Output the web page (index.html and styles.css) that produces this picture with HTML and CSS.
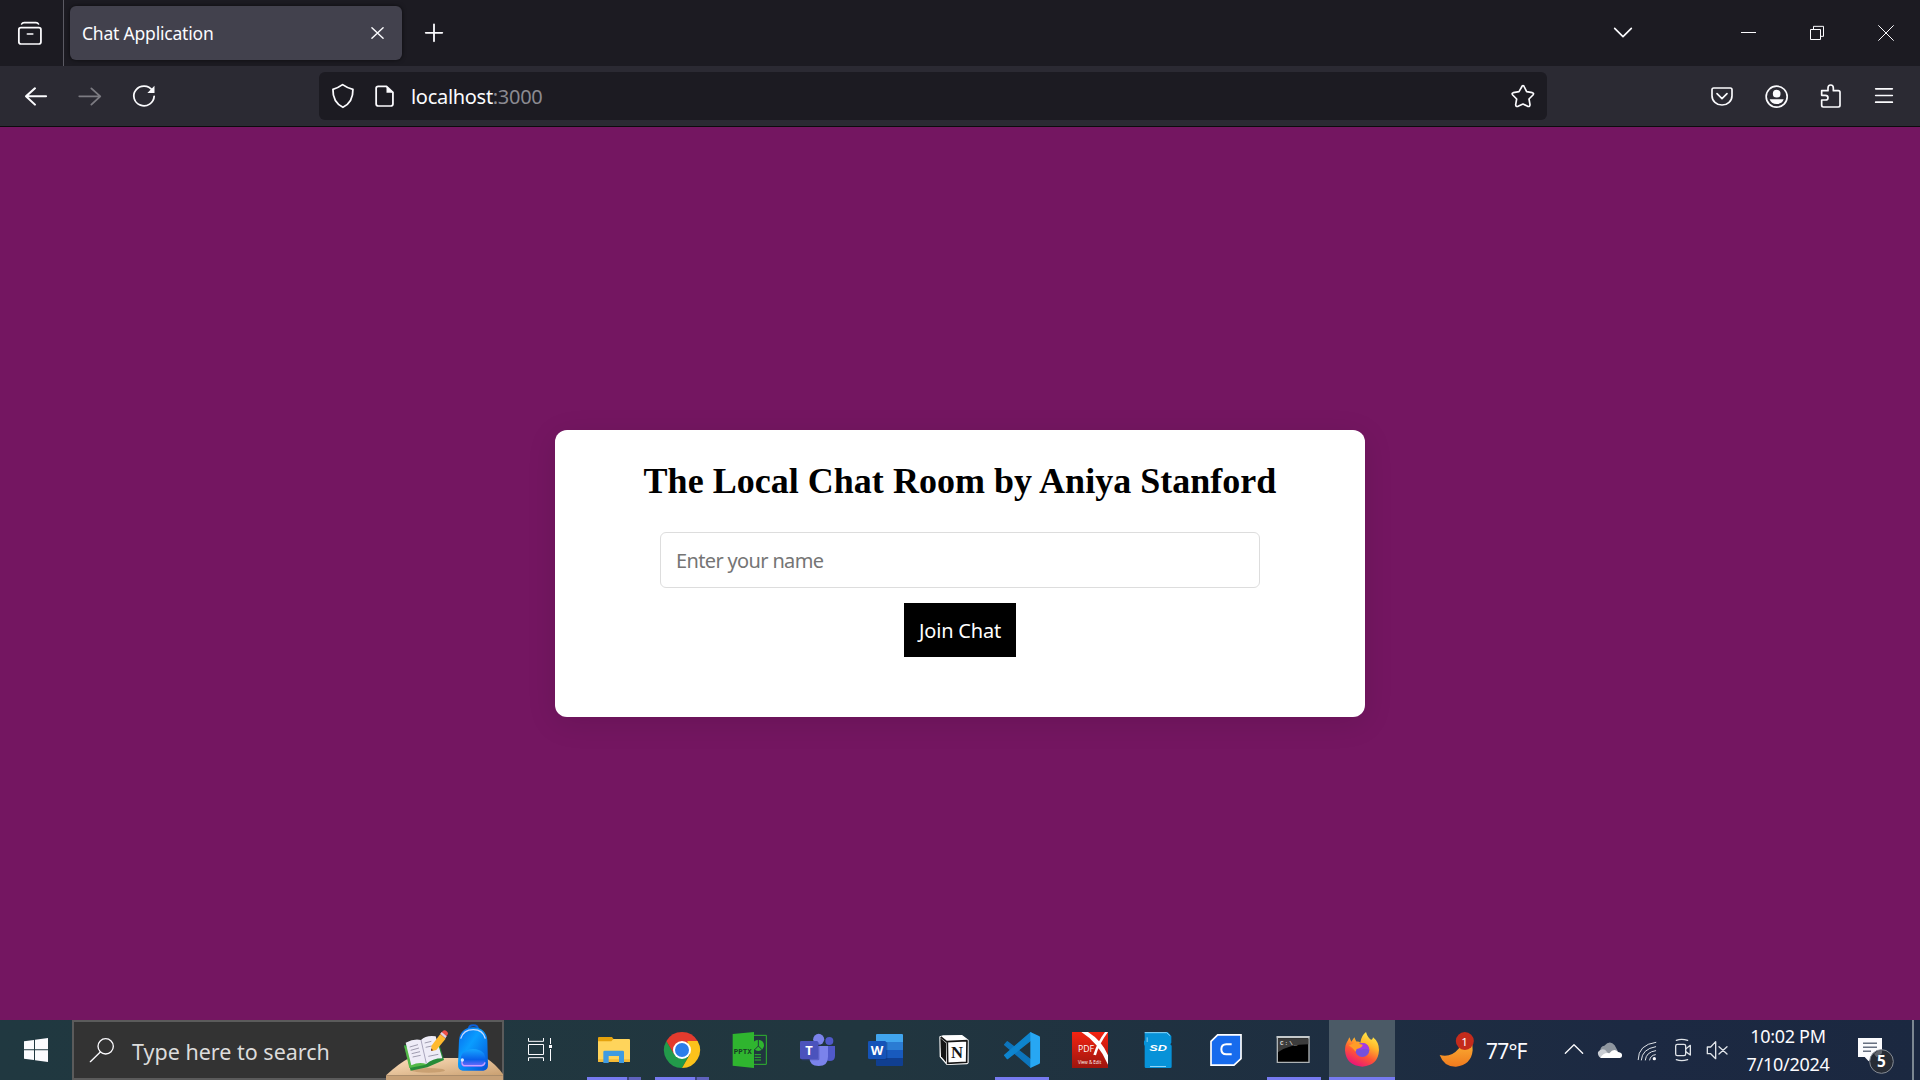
FILE: index.html
```html
<!DOCTYPE html>
<html lang="en">
<head>
<meta charset="utf-8">
<title>Chat Application</title>
<link rel="stylesheet" href="styles.css">
</head>
<body>
<header class="tabstrip">
  <svg class="firefox-view" viewBox="0 0 177 198" preserveAspectRatio="none"><g class="line w5"><rect x="53" y="83" width="62" height="49" rx="6"/><path d="M61 72q2-4 7-4h33q5 0 7 4"/><path d="M77 102h15"/></g></svg>
  <div class="tab">
    <span class="tab-title">Chat Application</span>
    <svg class="tab-close" viewBox="1029 69 60 60" preserveAspectRatio="none"><path class="line w4" d="M1043 83l32 32M1075 83l-32 32"/></svg>
  </div>
  <svg class="new-tab" viewBox="1180 66 72 72" preserveAspectRatio="none"><path class="line w5" d="M1216 76v51M1193 101.500h46"/></svg>
  <svg class="window-buttons" viewBox="360 0 960 198">
    <path class="line w5" d="M404 85l25 25 25-25"/>
    <g class="line sharp w3"><path d="M783 97.500h45"/><path d="M991.500 88.500h30v30h-30zM1000.500 88v-9h30v30h-9"/><path d="M1195 76l46 46M1241 76l-46 46"/></g>
  </svg>
</header>
<nav class="toolbar">
  <svg class="nav-buttons" viewBox="0 198 894 180" preserveAspectRatio="none">
    <path class="line w6" d="M129 289H74M98 265l-25 24 25 25"/>
    <path class="line w5 disabled" d="M222 289h58M256 265l25 24-25 25"/>
    <path class="line w5" d="M427 271a28.500 29.500 0 1 0 5 18"/><path class="fill" d="M433 257v22h-20z"/>
  </svg>
  <div class="urlbar">
    <svg class="url-icons" viewBox="894 216 252 144" preserveAspectRatio="none">
      <path class="line w5" d="M960 254q13 10 29 14 1 39-28 54-29-15-28-54 14-4 27-14z"/>
      <path class="line w5" d="M1060 259h23l18 18v35q0 6-6 6h-35q-6 0-6-6v-47q0-6 6-6z"/><path class="fill" d="M1083 259l19 19h-19z"/>
    </svg>
    <span class="url">localhost<span class="port">:3000</span></span>
    <svg class="star" viewBox="57 216 144 144"><path class="line w5" d="M129 257q3 0 4 4l7 14 17 3q6 2 2 7l-12 12 3 17q0 7-7 5l-14-7-15 7q-7 2-7-5l3-17-12-12q-4-5 2-7l17-3 8-14q1-4 4-4z"/></svg>
  </div>
  <svg class="tool-buttons" viewBox="660 198 660 180">
    <path class="line w5" d="M701 264h50q5 0 5 5v18a30 28 0 0 1-60 0v-18q0-5 5-5zM711 281l15 15 15-15"/>
    <circle class="line w5" cx="890" cy="290" r="31.500"/><circle class="fill" cx="890" cy="281" r="11.500"/><path class="fill" d="M869 298h42q-4 14-21 14t-21-14z"/>
    <path class="line w5" d="M1025 272h19v-8q0-9 8-9t8 9v8h15q5 0 5 5v39q0 5-5 5h-45q-5 0-5-5v-16h11q8 0 8-7t-8-7h-11z"/>
    <path class="line w5" d="M1187 266.500h50M1187 286.500h50M1187 306.500h50"/>
  </svg>
</nav>
<main class="page">
  <section class="card">
    <h1 class="heading">The Local Chat Room by Aniya Stanford</h1>
    <input class="name-input" type="text" placeholder="Enter your name">
    <button class="join" type="button">Join Chat</button>
  </section>
</main>
<footer class="taskbar">
  <svg class="start" viewBox="0 30 216 180"><path class="fill" d="M72 94l30-4v28H72zM105 89l39-5v34h-39zM72 121h30v29l-30-4zM105 121h39v35l-39-5z"/></svg>
  <div class="search">
    <svg class="search-icon" viewBox="222 36 174 168"><circle class="line w4" cx="317" cy="109" r="23"/><path class="line w4" d="M301 126l-30 29"/></svg>
    <span class="search-text">Type here to search</span>
    <svg class="search-art" viewBox="195 36 354 174">
      <defs>
        <linearGradient id="desk" x1="0" y1="0" x2="1" y2="1"><stop offset="0" stop-color="#ffe0bd"/><stop offset="1" stop-color="#c99f70"/></linearGradient>
        <linearGradient id="bag" x1="0" y1="0" x2="1" y2="1"><stop offset="0" stop-color="#0767ea"/><stop offset=".4" stop-color="#0a9dff"/><stop offset="1" stop-color="#0450d5"/></linearGradient>
        <linearGradient id="pocket" x1="0" y1="0" x2="0" y2="1"><stop offset="0" stop-color="#16a5ff"/><stop offset=".6" stop-color="#0860ea"/><stop offset="1" stop-color="#7d6bff"/></linearGradient>
      </defs>
      <path fill="url(#desk)" d="M198 196q40-37 70-52h230q32 20 53 52z"/><path fill="#c6a077" d="M198 196h353v14H198z"/>
      <ellipse cx="325" cy="181" rx="50" ry="7" fill="#b98d5d" opacity=".6"/>
      <path fill="#268b38" d="M252 106l20 76 50-10 50-22-18-60z"/><path fill="#54b948" d="M252 106l16 68 50-10-2-8z"/>
      <path fill="#eeecf7" d="M257 98q25-13 46-8 15-15 44-11l20 66q-30 0-48 17-22-8-45 4z"/>
      <path fill="none" stroke="#aaa6bd" stroke-width="3" d="M303 90l16 70"/><path fill="none" stroke="#76728a" stroke-width="2" d="M269 111l25-7M272 121l25-7M275 131l25-6M278 141l24-5M314 99l20-5M317 112l18-4M325 139l30-6"/>
      <path fill="#ffb92e" d="M361 72l16 14-28 34-14 3-1-15z"/><path fill="#ef4f48" d="M368 64q5-6 12 0 7 6 2 11l-7 9-15-12z"/><path fill="#dcd5e2" d="M361 71l4-5 15 13-4 6z"/><path fill="#7e4430" d="M333 123v-8l7 6z"/>
      <path fill="none" stroke="#0b5ed8" stroke-width="6" d="M446 59q0-13 14-13t14 13"/>
      <path fill="url(#bag)" d="M417 90q4-36 42-38 39 2 43 38l2 72q1 18-14 20h-62q-15-2-14-20z"/>
      <path fill="none" stroke="#c6d9ff" stroke-width="4" d="M422 86q8-27 38-27 29 0 36 27"/>
      <path fill="url(#pocket)" d="M422 158v-10q1-29 38-31 36 2 36 31v12q-2 10-12 10h-50q-10 0-12-12z"/><path fill="none" stroke="#c8a2ff" stroke-width="4" d="M426 148v10q0 9 10 9h48q9-1 11-10"/><circle cx="427" cy="150" r="5" fill="#d5eaff"/>
    </svg>
  </div>
  <svg class="task-view" viewBox="552 30 228 180"><g class="line sharp w3"><path d="M625.500 84v10h45V84M625.500 103.500h45v30h-45zM625.500 153v-10h45v10M691.500 84v18M691.500 117v36"/></g><path class="fill" d="M687 105h9v9h-9z"/></svg>
  <div class="apps">
    <div class="app running split"><svg viewBox="780 30 204 180"><path fill="#e5a20c" d="M834 84q0-3 3-3h39l4 5v12h-46z"/><path fill="#ffd45b" d="M834 94h40l6-7h47q3 0 3 3v63q0 3-3 3h-90q-3 0-3-3z"/><path fill="#f6bb36" d="M834 148h96v5q0 3-3 3h-90q-3 0-3-3z"/><path fill="#3f9be2" d="M850 126q0-4 4-4h54q4 0 4 4v33h-15v-21h-31v21h-16z"/></svg></div>
    <div class="app running split"><svg viewBox="24 30 204 180">
      <path fill="#e33b2e" d="M79.200 93A54 54 0 0 1 172.800 93L150 106H102z"/><path fill="#229a4a" d="M79.200 93A54 54 0 0 0 126 174L149 133H103z"/><path fill="#fcc21b" d="M172.800 93A54 54 0 0 1 126 174L149.400 133.500 142 93z"/><path fill="#e33b2e" d="M79.200 93l24 41 5-25 18-16h46.600z"/>
      <circle cx="126" cy="120" r="27" fill="#fff"/><circle cx="126" cy="120" r="21" fill="#2b7de9"/></svg></div>
    <div class="app"><svg viewBox="228 30 204 180"><path fill="none" stroke="#2fb52f" stroke-width="3" d="M341 76h38v87h-38"/><path fill="#2fb52f" d="M278 72l64-6v108l-64-7z"/><circle cx="355" cy="106" r="17" fill="#2fb52f"/><path stroke="#213840" stroke-width="3" fill="none" d="M355 88v20l-12 12M355 108l12 12"/><path stroke="#2fb52f" stroke-width="3" d="M344 134h19M344 142h19M344 150h19"/><text class="pptx-label" x="281" y="131" textLength="54" lengthAdjust="spacingAndGlyphs">PPTX</text></svg></div>
    <div class="app"><svg viewBox="432 30 204 180"><circle cx="568" cy="93" r="12" fill="#5059c9"/><path fill="#5059c9" d="M556 108h29v30q0 15-16 15-13 0-13-15z"/><circle cx="536" cy="88" r="16.500" fill="#7b83eb"/><path fill="#7b83eb" d="M508 108h56v32q0 28-28 28t-28-28z"/><rect x="484" y="97" width="54" height="54" rx="4" fill="#3b3fa0" opacity=".5"/><rect x="480" y="93" width="54" height="54" rx="4" fill="#4b53bc"/><text class="office-letter" x="507" y="134">T</text></svg></div>
    <div class="app"><svg viewBox="636 30 204 180"><path fill="#41a5ee" d="M711 72h75q3 0 3 3v21h-81V75q0-3 3-3z"/><path fill="#2b7cd3" d="M708 96h81v24h-81z"/><path fill="#185abd" d="M708 120h81v24h-81z"/><path fill="#103f91" d="M708 144h81v21q0 3-3 3h-75q-3 0-3-3z"/><rect x="686" y="96" width="56" height="54" rx="4" fill="#0b3277" opacity=".4"/><rect x="684" y="93" width="54" height="54" rx="4" fill="#1553b8"/><text class="office-letter" x="711" y="134">W</text></svg></div>
    <div class="app"><svg viewBox="0 0 204 180"><path fill="#fff" stroke="#fff" stroke-width="4" stroke-linejoin="round" d="M60 51l10-3 56-1 18 14v67l-4 3-59 2-20-23z"/><path fill="#151515" d="M61 54l17 15v58l-15-18z"/><path fill="none" stroke="#151515" stroke-width="5" d="M62 51l18 14 63-3M82 65l1 65 57-3 1-64"/><text class="notion-letter" x="111" y="115">N</text></svg></div>
    <div class="app running"><svg viewBox="204 0 204 180"><path fill="#0d75bd" stroke="#0d75bd" stroke-width="4" stroke-linejoin="round" d="M262 65l70 54v22l-78-67z"/><path fill="#0e85cf" stroke="#0e85cf" stroke-width="4" stroke-linejoin="round" d="M254 106l78-68v23l-70 55z"/><path fill="#27a7f3" d="M331 36l26 12q3 1 3 4v76q0 3-3 4l-26 12z"/></svg></div>
    <div class="app"><svg viewBox="408 0 204 180"><defs><linearGradient id="pdf" x1="0" y1="0" x2="0" y2="1"><stop offset="0" stop-color="#f32412"/><stop offset="1" stop-color="#9d150e"/></linearGradient></defs><path fill="url(#pdf)" d="M456 36h108v108H456z"/><path fill="#fff" d="M484 36h20q42 26 60 70v28q-28-66-80-98zM555 36h9q-28 38-36 70l-8-2q12-38 35-68z"/><text class="pdf-label" x="474" y="96" textLength="48" lengthAdjust="spacingAndGlyphs">PDF</text><text class="pdf-small" x="474" y="131" textLength="70" lengthAdjust="spacingAndGlyphs">View &amp; Edit</text></svg></div>
    <div class="app"><svg viewBox="612 0 204 180"><path fill="#0792d8" d="M676 36h67l11 12v20l-3 5 4 4v63q0 4-4 4h-73q-4 0-4-4V78l-2-5v-9l2-3V39q0-3 2-3z"/><path stroke="#8fd3f5" stroke-width="3" fill="none" d="M690 139.500h48M681.500 52v14M674 38h66l10 9"/><text class="sd-label" x="714" y="94" textLength="53" lengthAdjust="spacingAndGlyphs">SD</text></svg></div>
    <div class="app"><svg viewBox="816 0 204 180"><path fill="#176bed" stroke="#fff" stroke-width="5" d="M893 44.500h70V116l-21 19.500h-69V64z"/><path fill="none" stroke="#fff" stroke-width="6" d="M935 73h-16q-15 0-15 15t15 15h16"/></svg></div>
    <div class="app running"><svg viewBox="1020 0 204 180"><path fill="#000" stroke="#aeb3b5" stroke-width="4" d="M1072 50h95v77h-95z"/><path fill="#c5c9cb" d="M1070 48h98v7h-98z"/><path fill="#555" d="M1074 57h92v16q-60 0-92 24z" opacity=".7"/><text class="cmd-label" x="1080" y="75" textLength="52">C:\_</text></svg></div>
    <div class="app active"><svg viewBox="1224 0 204 180"><defs><linearGradient id="fox" x1=".8" y1="0" x2=".3" y2="1"><stop offset="0" stop-color="#fff44f"/><stop offset=".35" stop-color="#ffb52b"/><stop offset=".65" stop-color="#ff5634"/><stop offset="1" stop-color="#e9107e"/></linearGradient></defs><path fill="url(#fox)" d="M1338 36q5 17 15 23 5 1 6-7 18 14 18 38-2 46-50 50-49-3-52-49 0-18 9-30l4-9 6 13 9-13 6 13q8-1 12 3 3-22 17-32z"/><circle cx="1327" cy="90" r="21" fill="#7650db"/><path fill="#a53be5" d="M1306 87q7-19 24-18 17 3 18 23-9-10-24-3z"/><path fill="#ff9c28" d="M1286 76q13-3 22-12 7 9 20 10 0 8-18 13l-3 8q-12-14-21-19z"/></svg></div>
  </div>
  <div class="tray">
    <svg class="weather" viewBox="459 30 150 180"><defs><linearGradient id="moon" x1="0" y1="0" x2="0" y2="1"><stop offset="0" stop-color="#ffc13a"/><stop offset="1" stop-color="#f07a1e"/></linearGradient></defs><path fill="url(#moon)" d="M558 72q22 18 20 49-4 44-50 49-36 1-49-35 35 8 56-18 21-20 23-45z"/><circle cx="554.500" cy="93" r="27" fill="#c42b1c"/><text class="badge-text" x="554" y="107">1</text></svg>
    <span class="temp">77°F</span>
    <svg class="tray-icons" viewBox="837 30 540 180">
      <path class="line w4" d="M856 130l26-26 26 26"/>
      <path fill="#8f969f" d="M961 123q-1-14 12-16 17-19 31-1l12 22-37 14z"/><path fill="#c9cdd3" d="M961 143q-9-7-7-17 8-12 21-7l22 24z"/><path fill="#fff" d="M961 144q10-18 27-14 14-17 26-4 14 2 12 12 0 5-6 6z"/>
      <path class="line w3 thin" d="M1074.500 149q0-45 53-52M1084 150q2-33 43-40M1096 150q2-24 31-28M1109 150q2-14 17-16"/><circle class="fill" cx="1123" cy="146" r="5"/>
      <g class="line w4 thin"><rect x="1187" y="103" width="30" height="34" rx="5"/><path d="M1217 117l14-11v29l-14-10M1189 91q15-6 34 0M1189 149q15 6 34 0"/><path d="M1282 111h10l15-16v51l-15-15h-10zM1317 110l24 22M1341 110l-24 22"/></g>
    </svg>
    <div class="clock"><span class="time">10:02 PM</span><span class="date">7/10/2024</span></div>
    <svg class="notifications" viewBox="720 30 216 180"><path class="fill" d="M774 84h72v57h-24l-16 13-12-13h-20z"/><path stroke="#1c2942" stroke-width="3" d="M789 99.500h42M789 111.500h42M789 123.500h24"/><circle cx="844.500" cy="154.500" r="35.500" fill="#272c35" stroke="#858b94" stroke-width="3"/><path fill="#777c84" d="M822 131q10-10 24-11v10l-16 12z" opacity=".7"/><text class="count" x="844.500" y="171">5</text></svg>
    <div class="show-desktop"></div>
  </div>
</footer>
</body>
</html>
```
FILE: styles.css
```css
* { box-sizing: border-box; }
body {
  margin: 0;
  width: 1920px;
  height: 1080px;
  overflow: hidden;
  display: flex;
  flex-direction: column;
  font-family: "Noto Sans", sans-serif;
  color: #fbfbfe;
}
svg { display: block; flex: none; }
span { white-space: nowrap; }

.line { fill: none; stroke: #fbfbfe; stroke-linecap: round; stroke-linejoin: round; }
.sharp { stroke-linecap: butt; stroke-linejoin: miter; }
.thin { stroke: #dfe3e8; }
.fill { fill: #fbfbfe; }
.w3 { stroke-width: 3; }
.w4 { stroke-width: 4; }
.w5 { stroke-width: 5; }
.w6 { stroke-width: 6; }
.disabled { stroke: #7c7b82; }

.tabstrip { height: 66px; flex: none; display: flex; align-items: center; background: #1c1b22; }
.firefox-view { width: 64px; height: 66px; border-right: 1px solid #5b5a63; }
.tab {
  width: 332px;
  height: 54px;
  margin-left: 6px;
  padding: 0 14px 0 12px;
  display: flex;
  align-items: center;
  justify-content: space-between;
  background: #42414d;
  border-radius: 6px;
  box-shadow: 0 0 4px rgba(0, 0, 0, .6);
}
.tab-title { font-size: 17.500px; letter-spacing: -.2px; }
.tab-close { width: 21px; height: 20px; }
.new-tab { width: 26px; height: 24px; margin-left: 19px; }
.window-buttons { width: 320px; height: 66px; margin-left: auto; }

.toolbar { height: 61px; flex: none; display: flex; background: #2b2a33; border-bottom: 1px solid #0c0c0d; }
.nav-buttons { width: 319px; height: 60px; }
.urlbar { width: 1228px; height: 48px; margin-top: 6px; display: flex; align-items: center; background: #1c1b22; border-radius: 6px; }
.url-icons { width: 90px; height: 48px; }
.url { padding-left: 2px; font-size: 20px; letter-spacing: -.3px; }
.port { color: #8b8a91; }
.star { width: 48px; height: 48px; margin-left: auto; }
.tool-buttons { width: 220px; height: 60px; margin-left: auto; }

.page { height: 893px; flex: none; display: flex; align-items: center; justify-content: center; background: #741661; }
.card {
  width: 810px;
  height: 287px;
  padding-top: 30px;
  display: flex;
  flex-direction: column;
  align-items: center;
  background: #fff;
  border-radius: 12px;
  box-shadow: 0 6px 30px rgba(0, 0, 0, .1);
}
.heading { margin: 0 0 30px; font: bold 36px/42px "Liberation Serif", serif; letter-spacing: .02px; color: #000; }
.name-input {
  width: 600px;
  height: 56px;
  padding: 0 15px;
  margin-bottom: 15px;
  border: 1px solid #ddd;
  border-radius: 6px;
  background: #fff;
  font: 20px "Noto Sans", sans-serif;
  letter-spacing: -.65px;
}
.name-input::placeholder { color: #757575; opacity: 1; }
.join { width: 112px; height: 54px; padding: 0; border: 0; background: #000; color: #fff; font: 20px "Noto Sans", sans-serif; letter-spacing: -.2px; }

.taskbar { height: 60px; flex: none; display: flex; background: linear-gradient(90deg, #203840 0, #21363f 45%, #1c2942 85%, #1b2840 100%); }
.start { width: 72px; height: 60px; }
.search { width: 432px; height: 60px; display: flex; align-items: center; background: #333; border: 2px solid #5b5b5b; }
.search-icon { width: 58px; height: 56px; }
.search-text { padding-top: 2px; color: #dcdcdc; font-size: 21.500px; }
.search-art { width: 118px; height: 58px; margin: 0 -1px -2px auto; }
.task-view { width: 76px; height: 60px; }
.apps { display: flex; }
.app { width: 68px; height: 60px; position: relative; }
.app svg { width: 68px; height: 60px; }
.app.running::after { content: ""; position: absolute; bottom: 0; left: 7px; width: 54px; height: 3px; background: #767af0; }
.app.split::after { background: linear-gradient(90deg, #767af0 40px, #3d4380 40px, #3d4380 42px, #5f62bd 42px); }
.app.active { background: linear-gradient(#4b5a66, #4b5a66) 1px 0 / 66px 60px no-repeat; }
.app.active::after { content: ""; position: absolute; bottom: 0; left: 1px; width: 66px; height: 3px; background: #767af0; }
.pptx-label { font: bold 24px "Liberation Mono", monospace; fill: #173c25; }
.office-letter { font: bold 39px "Open Sans", sans-serif; fill: #fff; text-anchor: middle; }
.notion-letter { font: bold 50px "Liberation Serif", serif; fill: #151515; text-anchor: middle; }
.pdf-label { font: 25px "Open Sans", sans-serif; fill: #fff; }
.pdf-small { font: 14px "Open Sans", sans-serif; fill: #fff; }
.sd-label { font: italic bold 27px "Liberation Sans", sans-serif; fill: #fff; text-anchor: middle; }
.cmd-label { font: bold 18px "Liberation Mono", monospace; fill: #ddd; }

.tray { margin-left: auto; display: flex; align-items: center; }
.weather { width: 50px; height: 60px; }
.badge-text { font: 35px "Noto Sans", sans-serif; fill: #fff; text-anchor: middle; }
.temp { width: 76px; padding: 2px 0 0 3px; font-size: 21px; letter-spacing: -.8px; }
.tray-icons { width: 180px; height: 60px; }
.clock { width: 101px; padding-right: 3px; display: flex; flex-direction: column; align-items: center; font-size: 18px; line-height: 28px; letter-spacing: -.3px; }
.notifications { width: 72px; height: 60px; }
.count { font: bold 46px "Noto Sans", sans-serif; fill: #fff; text-anchor: middle; }
.show-desktop { width: 8px; height: 60px; border-left: 2px solid #7b8791; }
```
